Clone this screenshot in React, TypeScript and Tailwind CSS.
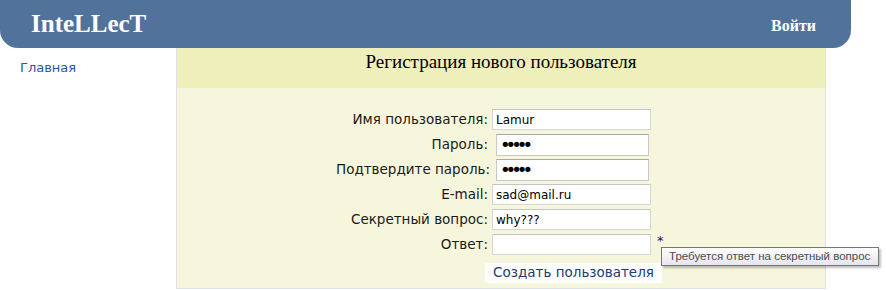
import React from "react";

const sans = { fontFamily: "'DejaVu Sans', Verdana, sans-serif" };

const rows = [
  { label: "Имя пользователя:", value: "Lamur", type: "text" },
  { label: "Пароль:", value: "12345", type: "password" },
  { label: "Подтвердите пароль:", value: "12345", type: "password" },
  { label: "E-mail:", value: "sad@mail.ru", type: "text" },
  { label: "Секретный вопрос:", value: "why???", type: "text" },
  { label: "Ответ:", value: "", type: "text", required: true },
];

export default function App() {
  return (
    <div className="relative w-[886px] h-[290px] overflow-hidden bg-white">
      <header className="flex h-[48px] w-[851px] items-start justify-between rounded-b-[18px] bg-[#50729b] font-['Liberation_Serif',serif] font-bold text-white">
        <div className="pl-[31px] pt-[11px] text-[25px] leading-none">InteLLecT</div>
        <div className="pr-[35px] pt-[18px] text-[16px] leading-none">Войти</div>
      </header>

      <div className="flex">
        <aside className="w-[176px] pl-[20px] pt-[13px] text-[13px] leading-none text-[#2b56a0]" style={sans}>
          Главная
        </aside>

        <main className="w-[650px] border-x border-b border-[#dde2ea]">
          <div className="h-[40px] bg-[#efefbb] pt-[4px] text-center font-['Liberation_Serif',serif] text-[19px] leading-none text-black">
            Регистрация нового пользователя
          </div>

          <div className="h-[200px] bg-[#f6f6dc] pt-[19px]" style={sans}>
            <div className="ml-[159px] w-[330px]">
              {rows.map((r) => (
                <div key={r.label} className="flex h-[25px] items-center">
                  <label className="w-[152px] whitespace-nowrap text-right text-[13.5px] text-[#1a1a1a]">{r.label}</label>
                  {r.type === "password" ? (
                    <input
                      type="password"
                      readOnly
                      value={r.value}
                      className="ml-[8px] h-[22px] w-[153px] border border-[#c9c9c9] border-t-[#a9a9a9] bg-white px-[3px] text-[18px] tracking-[-5px] text-black outline-none"
                    />
                  ) : (
                    <input
                      type="text"
                      readOnly
                      value={r.value}
                      className="ml-[4px] h-[21px] w-[159px] border border-[#d6d6d6] border-t-[#c4c4c4] bg-white px-[3px] text-[12px] text-black outline-none"
                      style={sans}
                    />
                  )}
                  {r.required && (
                    <span className="relative -top-[4px] ml-[6px] text-[13px] text-[#1a1a1a]">*</span>
                  )}
                </div>
              ))}
              <button className="ml-[149px] mt-[6px] h-[20px] w-[177px] bg-[#fdfdfd] text-[13.5px] leading-none text-[#233c6e]">
                Создать пользователя
              </button>
            </div>
          </div>
        </main>
      </div>

      <div
        className="absolute left-[661px] top-[247px] flex h-[19px] w-[218px] items-center whitespace-nowrap border border-[#767676] bg-gradient-to-b from-white to-[#e4e5f0] pl-[7px] text-[11.5px] text-[#4c4c4c] shadow-[2px_2px_2px_rgba(0,0,0,0.25)]"
        style={{ fontFamily: "'Liberation Sans', Arial, sans-serif" }}
      >
        Требуется ответ на секретный вопрос
      </div>
    </div>
  );
}
